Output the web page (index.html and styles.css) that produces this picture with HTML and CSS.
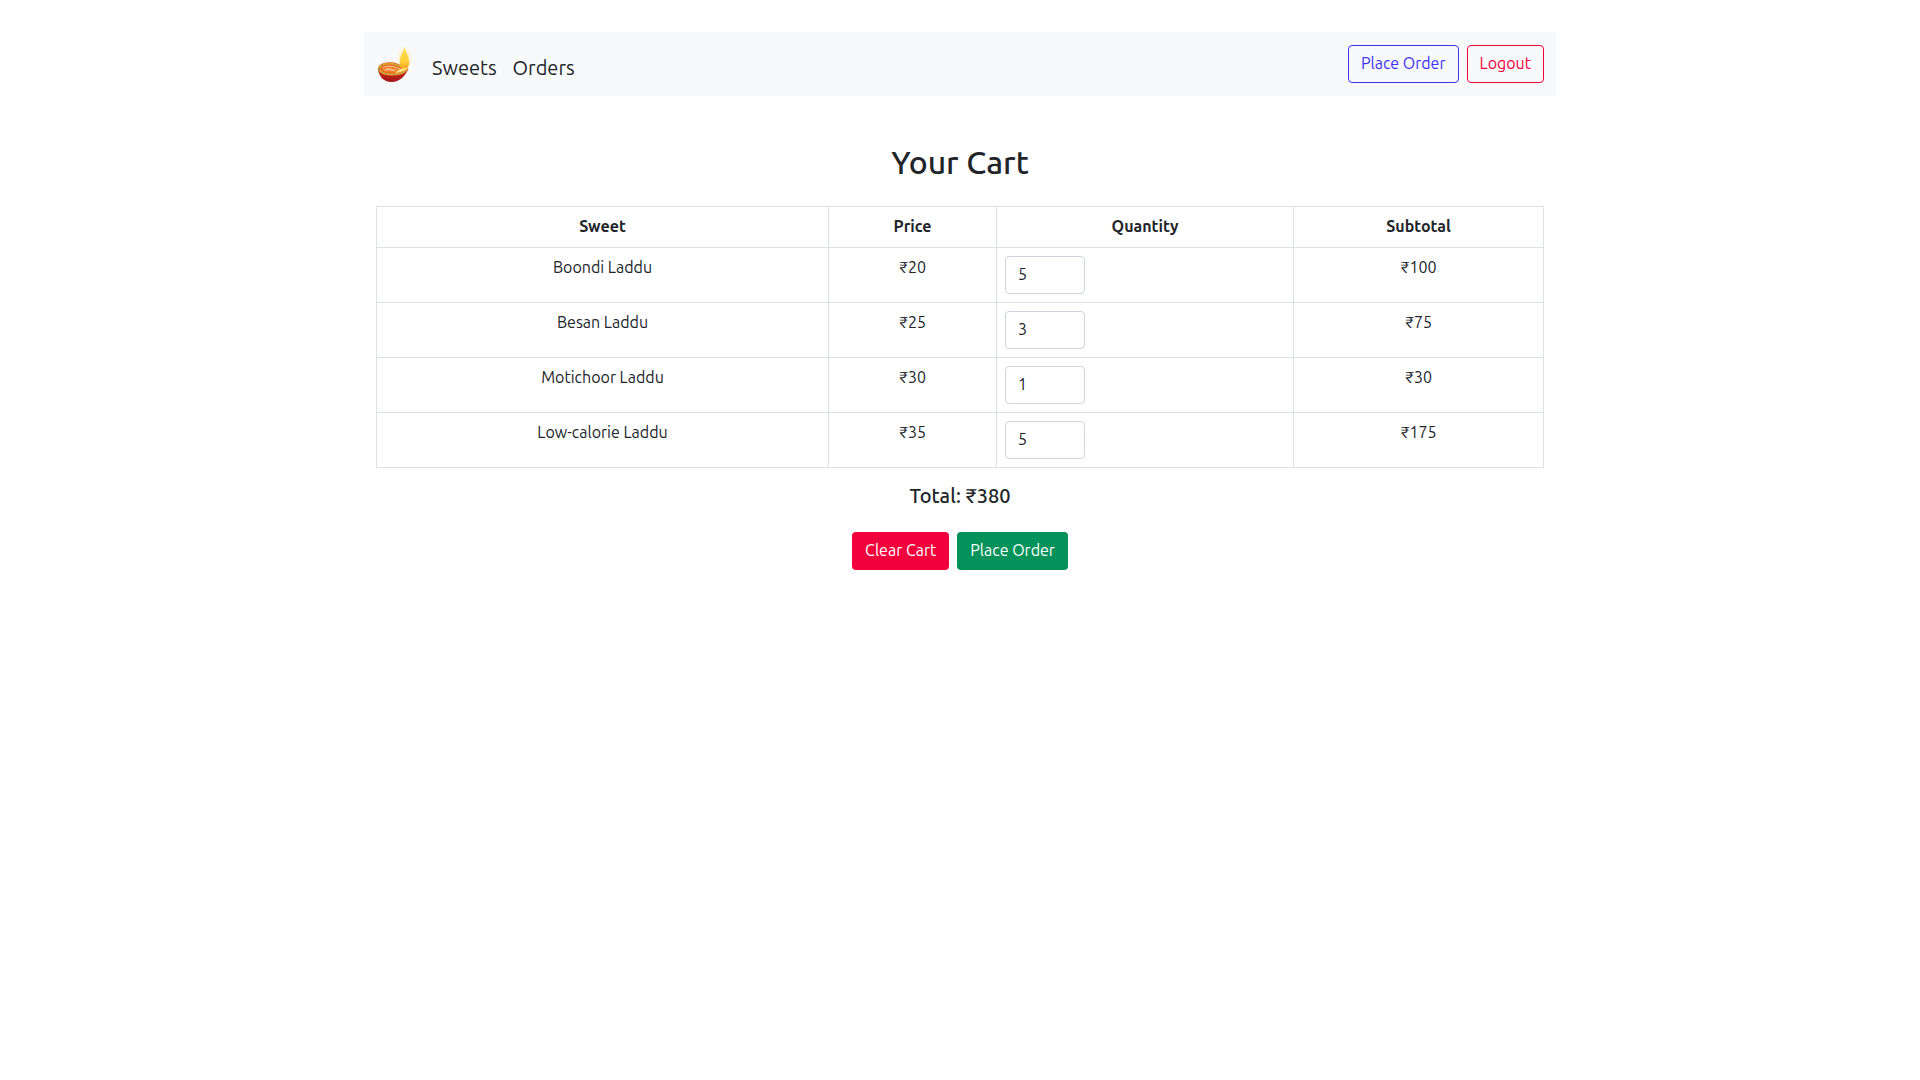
FILE: index.html
```html
<!DOCTYPE html>
<html lang="en">
<head>
<meta charset="utf-8">
<title>Your Cart</title>
<link rel="stylesheet" href="styles.css">
</head>
<body>
<div class="container">
  <nav class="navbar">
    <a class="brand" href="#" aria-label="Home">
      <svg class="logo" viewBox="18 18 120 120">
        <defs>
          <radialGradient id="glow"><stop offset="0" stop-color="#ffe27a" stop-opacity=".8"/><stop offset="1" stop-color="#fff0b8" stop-opacity="0"/></radialGradient>
          <linearGradient id="flame" x1="0" y1="0" x2="0" y2="1"><stop offset="0" stop-color="#ffdc48"/><stop offset=".65" stop-color="#ffcf38"/><stop offset="1" stop-color="#f7a51c"/></linearGradient>
          <linearGradient id="bowl" x1="0" y1="0" x2="0" y2="1"><stop offset="0" stop-color="#c9301c"/><stop offset="1" stop-color="#a51418"/></linearGradient>
        </defs>
        <ellipse cx="103" cy="53" rx="28" ry="37" fill="url(#glow)"/>
        <path d="M24 86C26 108 40 126 65 126C88 126 106 108 115 87Z" fill="url(#bowl)"/>
        <path d="M24 86C26 71 45 65 66 67C83 69 92 76 115 87C111 98 93 107 67 107C41 107 25 99 24 86Z" fill="#e4581e"/>
        <path d="M28 86C31 74 48 70 65 71C82 73 92 81 111 88C105 97 89 103 67 103C44 103 29 96 28 86Z" fill="none" stroke="#f6a42a" stroke-width="5"/>
        <path d="M28 86C31 74 48 70 65 71C82 73 92 81 111 88C105 97 89 103 67 103C44 103 29 96 28 86Z" fill="none" stroke="#76a660" stroke-width="4" stroke-dasharray="4 8"/>
        <path d="M34 86C37 78 49 75 63 76C79 77 87 84 100 87C95 94 83 98 67 98C48 98 35 94 34 86Z" fill="#f07d2c"/>
        <path d="M38 84C45 78 60 78 70 80C80 82 84 86 92 88" fill="none" stroke="#ffc58c" stroke-width="3"/>
        <path d="M43 92C46 83 56 83 65 86C71 87 76 89 81 89C76 96 64 94 60 91C54 89 51 93 43 92Z" fill="#ffb67e"/>
        <path d="M103 22C99 38 89 53 89 68C89 79 94 86 103 87C113 86 118 79 118 69C118 53 108 38 103 22Z" fill="url(#flame)"/>
        <path d="M76 99C84 89 94 82 111 84C106 93 93 97 76 99Z" fill="#ffe582"/>
      </svg>
    </a>
    <div class="nav-links"><a href="#">Sweets</a><a href="#">Orders</a></div>
    <div class="nav-actions">
      <button class="btn outline-primary">Place Order</button>
      <button class="btn outline-danger">Logout</button>
    </div>
  </nav>
  <main class="cart">
    <h2 class="title">Your Cart</h2>
    <table class="table">
      <colgroup><col class="c-sweet"><col class="c-price"><col class="c-qty"><col class="c-sub"></colgroup>
      <thead><tr><th>Sweet</th><th>Price</th><th>Quantity</th><th>Subtotal</th></tr></thead>
      <tbody>
        <tr><td>Boondi Laddu</td><td>₹20</td><td><input class="qty" type="text" value="5"></td><td>₹100</td></tr>
        <tr><td>Besan Laddu</td><td>₹25</td><td><input class="qty" type="text" value="3"></td><td>₹75</td></tr>
        <tr><td>Motichoor Laddu</td><td>₹30</td><td><input class="qty" type="text" value="1"></td><td>₹30</td></tr>
        <tr><td>Low-calorie Laddu</td><td>₹35</td><td><input class="qty" type="text" value="5"></td><td>₹175</td></tr>
      </tbody>
    </table>
    <h5 class="total">Total: ₹380</h5>
    <div class="cart-actions">
      <button class="btn danger">Clear Cart</button>
      <button class="btn success">Place Order</button>
    </div>
  </main>
</div>
</body>
</html>
```

FILE: styles.css
```css
* { box-sizing: border-box; }
body {
  margin: 0;
  background: #fff;
  color: #212529;
  font: 400 16px/24px Ubuntu, "Noto Sans", sans-serif;
}
.container { width: 1192px; margin: 0 auto; padding-top: 32px; }
.navbar {
  display: flex;
  height: 64px;
  padding: 0 12px;
  background: #f8f9fb;
}
.brand { display: block; width: 40px; padding-top: 14px; }
.logo { display: block; width: 40px; height: 40px; }
.nav-links {
  display: flex;
  gap: 16px;
  padding: 21px 0 0 16px;
  font-size: 20px;
  line-height: 30px;
}
.nav-links a { color: #212529; text-decoration: none; white-space: nowrap; }
.nav-actions { display: flex; gap: 8px; margin-left: auto; padding-top: 13px; }
.btn {
  height: 38px;
  padding: 0 12px 2px;
  border: 1px solid transparent;
  border-radius: 4px;
  font: inherit;
  text-align: center;
  white-space: nowrap;
}
.outline-primary { color: #3d33f5; border-color: #3d33f5; background: transparent; }
.outline-danger { color: #f2003c; border-color: #f2003c; background: transparent; }
.danger { color: #fff; background: #f2003c; }
.success { color: #fff; background: #03925a; }
.cart { padding: 47px 12px 0; }
.title {
  margin: 0 0 25px;
  font-size: 32px;
  font-weight: 500;
  line-height: 38px;
  text-align: center;
}
.table {
  width: 1168px;
  table-layout: fixed;
  border-collapse: collapse;
}
.c-sweet { width: 452px; }
.c-price { width: 168px; }
.c-qty { width: 297px; }
.c-sub { width: 250px; }
.table th, .table td {
  padding: 7px 8px 9px;
  border: 1px solid #dee2e6;
  text-align: center;
  vertical-align: top;
}
.table th { height: 41px; font-weight: 700; }
.table td { height: 55px; }
.table td:nth-child(3) { padding: 8px; text-align: left; }
.qty {
  display: block;
  width: 80px;
  height: 38px;
  padding: 5px 12px 7px;
  border: 1px solid #ced4da;
  border-radius: 4px;
  background: #fff;
  color: #212529;
  font: inherit;
}
.total {
  margin: 16px 0 24px;
  font-size: 20px;
  font-weight: 500;
  line-height: 24px;
  text-align: center;
}
.cart-actions { display: flex; justify-content: center; gap: 8px; }
```
